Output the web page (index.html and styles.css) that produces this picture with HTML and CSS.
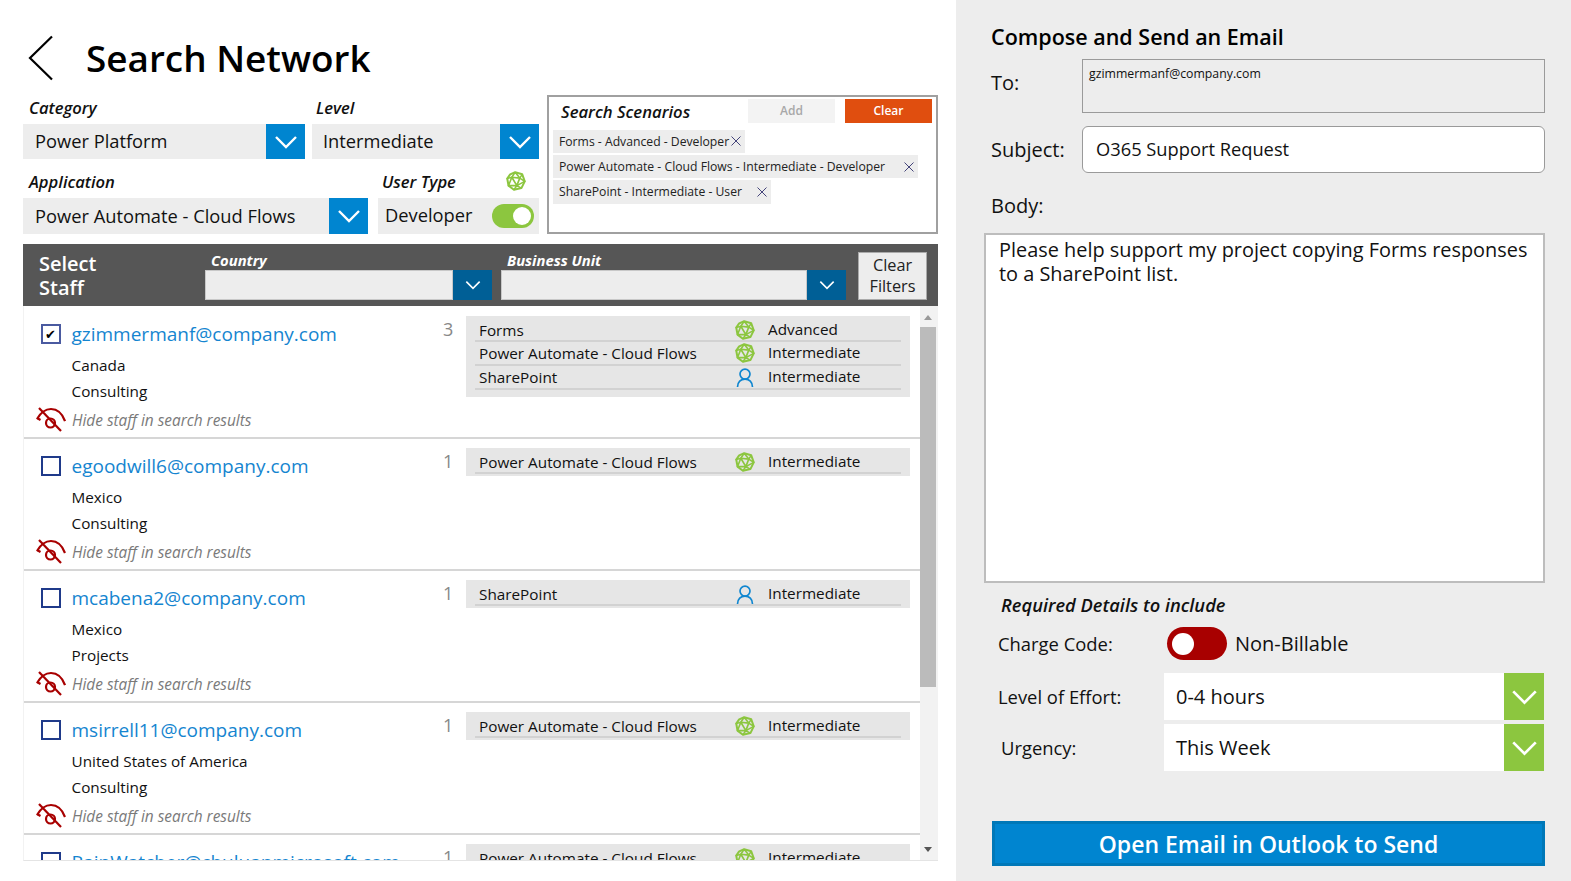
FILE: index.html
```html
<!DOCTYPE html>
<html lang="en">
<head>
  <meta charset="UTF-8">
  <meta name="viewport" content="width=device-width, initial-scale=1.0">
  <title>Search Network</title>
  <link rel="stylesheet" href="styles.css">
</head>
<body>
  <svg class="icon-defs" width="0" height="0">
    <symbol id="chevron" viewBox="0 0 24 14">
      <polyline points="2,2 12,12 22,2" fill="none" stroke="#fff" stroke-width="2.4"/>
    </symbol>
    <symbol id="close" viewBox="0 0 10 10">
      <path d="M0.5,0.5 9.5,9.5 M9.5,0.5 0.5,9.5" fill="none" stroke="#44447a" stroke-width="1"/>
    </symbol>
    <symbol id="mesh" viewBox="0 0 24 24">
      <g fill="none" stroke="#8cc63f" stroke-linejoin="round">
        <polygon stroke-width="2.4" points="11,1.5 19.5,4 22.5,12.5 18.5,20.5 9.5,22.5 3,17.5 1.5,9 5,4"/>
        <polygon stroke-width="2" points="7,7.5 16.5,8.5 13,17.5"/>
        <path stroke-width="1.9" d="M11,1.5 7,7.5 1.5,9 7,7.5 3,17.5 13,17.5 9.5,22.5 M13,17.5 18.5,20.5 M16.5,8.5 22.5,12.5 13,17.5 M16.5,8.5 11,1.5 M16.5,8.5 19.5,4"/>
      </g>
    </symbol>
    <symbol id="person" viewBox="0 0 24 24">
      <g fill="none" stroke="#0f86d0" stroke-width="2">
        <circle cx="12" cy="8.5" r="6"/>
        <path d="M3,24 C3,18 7,14.5 12,14.5 C17,14.5 21,18 21,24"/>
      </g>
    </symbol>
    <symbol id="eye-off" viewBox="0 0 30 26">
      <g fill="none" stroke="#a80000" stroke-width="2.2">
        <path d="M1,12 C5,5 10,2 15,2 C21,2 26,6 29,14"/>
        <path d="M1,11 L4.5,13"/>
        <circle cx="14.5" cy="16" r="4.5"/>
        <line x1="3" y1="1" x2="25" y2="24"/>
      </g>
    </symbol>
  </svg>

  <div class="app">
    <main class="search-panel">
      <div class="page-title">
        <svg class="back-icon" viewBox="0 0 26 46"><polyline points="24,1.5 2,23 24,44.5" fill="none" stroke="#000" stroke-width="2.2"/></svg>
        <h1>Search Network</h1>
      </div>

      <div class="top-section">
        <div class="filters">
          <div class="filter-row">
            <div class="filter filter-category">
              <div class="filter-label">Category</div>
              <div class="dropdown">
                <span class="dropdown-value">Power Platform</span>
                <span class="dropdown-btn"><svg class="chevron"><use href="#chevron"/></svg></span>
              </div>
            </div>
            <div class="filter filter-level">
              <div class="filter-label label-tight">Level</div>
              <div class="dropdown">
                <span class="dropdown-value value-tight">Intermediate</span>
                <span class="dropdown-btn"><svg class="chevron"><use href="#chevron"/></svg></span>
              </div>
            </div>
          </div>
          <div class="filter-row row-second">
            <div class="filter filter-application">
              <div class="filter-label">Application</div>
              <div class="dropdown">
                <span class="dropdown-value">Power Automate - Cloud Flows</span>
                <span class="dropdown-btn"><svg class="chevron"><use href="#chevron"/></svg></span>
              </div>
            </div>
            <div class="filter filter-usertype">
              <div class="filter-label label-tight usertype-label">User Type <svg class="mesh-icon"><use href="#mesh"/></svg></div>
              <div class="usertype-box">
                <span class="usertype-value">Developer</span>
                <span class="toggle toggle-on"></span>
              </div>
            </div>
          </div>
        </div>

        <section class="scenarios">
          <div class="scenarios-head">
            <div class="scenarios-title">Search Scenarios</div>
            <button class="btn-add">Add</button>
            <button class="btn-clear">Clear</button>
          </div>
          <div class="chip chip-1">Forms - Advanced - Developer<svg class="chip-x"><use href="#close"/></svg></div>
          <div class="chip chip-2">Power Automate - Cloud Flows - Intermediate - Developer<svg class="chip-x"><use href="#close"/></svg></div>
          <div class="chip chip-3">SharePoint - Intermediate - User<svg class="chip-x"><use href="#close"/></svg></div>
        </section>
      </div>

      <div class="staff-bar">
        <div class="staff-title">Select<br>Staff</div>
        <div class="staff-filter filter-country">
          <div class="staff-label">Country</div>
          <div class="staff-select">
            <span class="staff-input"></span>
            <span class="staff-btn"><svg class="chevron-small"><use href="#chevron"/></svg></span>
          </div>
        </div>
        <div class="staff-filter filter-unit">
          <div class="staff-label">Business Unit</div>
          <div class="staff-select">
            <span class="staff-input"></span>
            <span class="staff-btn"><svg class="chevron-small"><use href="#chevron"/></svg></span>
          </div>
        </div>
        <button class="btn-filters">Clear Filters</button>
      </div>

      <div class="staff-list">
        <div class="staff-rows">
          <div class="staff-row">
            <div class="staff-info">
              <div class="staff-email"><span class="checkbox checked">✔</span><a>gzimmermanf@company.com</a></div>
              <div class="staff-meta">Canada</div>
              <div class="staff-meta">Consulting</div>
              <div class="staff-hide"><svg class="eye-icon"><use href="#eye-off"/></svg><em>Hide staff in search results</em></div>
            </div>
            <div class="staff-count">3</div>
            <div class="skills skills-multi">
              <div class="skill"><span class="skill-name">Forms</span><svg class="skill-icon"><use href="#mesh"/></svg><span class="skill-level">Advanced</span></div>
              <div class="skill"><span class="skill-name">Power Automate - Cloud Flows</span><svg class="skill-icon"><use href="#mesh"/></svg><span class="skill-level">Intermediate</span></div>
              <div class="skill"><span class="skill-name">SharePoint</span><svg class="skill-icon"><use href="#person"/></svg><span class="skill-level">Intermediate</span></div>
            </div>
          </div>
          <div class="staff-row">
            <div class="staff-info">
              <div class="staff-email"><span class="checkbox"></span><a>egoodwill6@company.com</a></div>
              <div class="staff-meta">Mexico</div>
              <div class="staff-meta">Consulting</div>
              <div class="staff-hide"><svg class="eye-icon"><use href="#eye-off"/></svg><em>Hide staff in search results</em></div>
            </div>
            <div class="staff-count">1</div>
            <div class="skills">
              <div class="skill"><span class="skill-name">Power Automate - Cloud Flows</span><svg class="skill-icon"><use href="#mesh"/></svg><span class="skill-level">Intermediate</span></div>
            </div>
          </div>
          <div class="staff-row">
            <div class="staff-info">
              <div class="staff-email"><span class="checkbox"></span><a>mcabena2@company.com</a></div>
              <div class="staff-meta">Mexico</div>
              <div class="staff-meta">Projects</div>
              <div class="staff-hide"><svg class="eye-icon"><use href="#eye-off"/></svg><em>Hide staff in search results</em></div>
            </div>
            <div class="staff-count">1</div>
            <div class="skills">
              <div class="skill"><span class="skill-name">SharePoint</span><svg class="skill-icon"><use href="#person"/></svg><span class="skill-level">Intermediate</span></div>
            </div>
          </div>
          <div class="staff-row">
            <div class="staff-info">
              <div class="staff-email"><span class="checkbox"></span><a>msirrell11@company.com</a></div>
              <div class="staff-meta">United States of America</div>
              <div class="staff-meta">Consulting</div>
              <div class="staff-hide"><svg class="eye-icon"><use href="#eye-off"/></svg><em>Hide staff in search results</em></div>
            </div>
            <div class="staff-count">1</div>
            <div class="skills">
              <div class="skill"><span class="skill-name">Power Automate - Cloud Flows</span><svg class="skill-icon"><use href="#mesh"/></svg><span class="skill-level">Intermediate</span></div>
            </div>
          </div>
          <div class="staff-row">
            <div class="staff-info">
              <div class="staff-email"><span class="checkbox"></span><a>RainWatcher@chuluanmicrosoft.com</a></div>
            </div>
            <div class="staff-count">1</div>
            <div class="skills">
              <div class="skill"><span class="skill-name">Power Automate - Cloud Flows</span><svg class="skill-icon"><use href="#mesh"/></svg><span class="skill-level">Intermediate</span></div>
            </div>
          </div>
        </div>
        <div class="scrollbar">
          <span class="arrow-up"></span>
          <span class="thumb"></span>
          <span class="arrow-down"></span>
        </div>
      </div>
    </main>

    <aside class="email-panel">
      <h2>Compose and Send an Email</h2>
      <div class="field field-to">
        <label>To:</label>
        <div class="to-box">gzimmermanf@company.com</div>
      </div>
      <div class="field field-subject">
        <label>Subject:</label>
        <div class="subject-box">O365 Support Request</div>
      </div>
      <div class="body-label">Body:</div>
      <div class="body-box">Please help support my project copying Forms responses to a SharePoint list.</div>

      <div class="required-title">Required Details to include</div>
      <div class="detail detail-charge">
        <span class="detail-label">Charge Code:</span>
        <span class="toggle-big"></span>
        <span class="charge-value">Non-Billable</span>
      </div>
      <div class="detail">
        <span class="detail-label">Level of Effort:</span>
        <div class="green-select">
          <span class="green-value">0-4 hours</span>
          <span class="green-btn"><svg class="chevron"><use href="#chevron"/></svg></span>
        </div>
      </div>
      <div class="detail detail-urgency">
        <span class="detail-label label-urgency">Urgency:</span>
        <div class="green-select">
          <span class="green-value">This Week</span>
          <span class="green-btn"><svg class="chevron"><use href="#chevron"/></svg></span>
        </div>
      </div>
      <button class="btn-send">Open Email in Outlook to Send</button>
    </aside>
  </div>
</body>
</html>
```

FILE: styles.css
```css
* {
  margin: 0;
  padding: 0;
  box-sizing: border-box;
}

body {
  font-family: "Open Sans", "Noto Sans", sans-serif;
  background: #ffffff;
  color: #111111;
  overflow: hidden;
}

.icon-defs {
  display: block;
  height: 0;
}

.app {
  display: flex;
  width: 1571px;
  height: 881px;
}

/* left side */
.search-panel {
  flex: none;
  width: 956px;
  padding-left: 23px;
}

.page-title {
  display: flex;
  align-items: center;
  height: 95px;
  padding: 20px 0 0 5px;
}

.back-icon {
  width: 26px;
  height: 46px;
  margin-right: 32px;
}

h1 {
  font-size: 36.9px;
  font-weight: 600;
  color: #000;
}

.top-section {
  display: flex;
  gap: 8px;
  align-items: flex-start;
}

.filters {
  width: 516px;
}

.filter-row {
  display: flex;
  gap: 7px;
}

.row-second {
  gap: 10px;
}

.filter-category { width: 282px; }
.filter-level { width: 227px; }
.filter-application { width: 345px; }
.filter-usertype { width: 161px; }

.filter-label {
  height: 29px;
  padding: 1px 0 0 6px;
  font-size: 16.6px;
  font-weight: 600;
  font-style: italic;
  line-height: 24px;
}

.row-second .filter-label {
  height: 39px;
  padding-top: 11px;
}

.label-tight {
  padding-left: 4px;
}

.usertype-label {
  display: flex;
  justify-content: space-between;
  padding-right: 13px;
}

.mesh-icon {
  width: 20px;
  height: 20px;
  margin-top: 1px;
}

.dropdown {
  display: flex;
  align-items: center;
  height: 35px;
  background: #ededed;
  font-size: 18.3px;
}

.row-second .dropdown,
.usertype-box {
  height: 36px;
}

.dropdown-value {
  flex: 1;
  padding: 0 0 2px 12px;
}

.value-tight {
  padding-left: 11px;
}

.dropdown-btn {
  display: flex;
  align-items: center;
  justify-content: center;
  width: 39px;
  height: 100%;
  background: #0085d0;
}

.chevron {
  width: 24px;
  height: 14px;
}

.usertype-box {
  display: flex;
  align-items: center;
  justify-content: space-between;
  padding: 0 5px 0 7px;
  background: #ededed;
  font-size: 18.3px;
}

.usertype-value {
  padding-bottom: 3px;
}

.toggle {
  position: relative;
  width: 42px;
  height: 24px;
  border-radius: 12px;
  background: #8cc63f;
}

.toggle-on::after {
  content: '';
  position: absolute;
  top: 3px;
  right: 3px;
  width: 18px;
  height: 18px;
  border-radius: 50%;
  background: #fff;
}

.scenarios {
  width: 391px;
  height: 139px;
  padding: 0 4px;
  border: 2px solid #a0a0a0;
}

.scenarios-head {
  display: flex;
  align-items: flex-start;
  height: 32.5px;
}

.scenarios-title {
  width: 195px;
  padding: 3px 0 0 8px;
  font-size: 16.7px;
  font-weight: 600;
  font-style: italic;
}

.scenarios-head button {
  width: 87px;
  height: 24px;
  margin-top: 2px;
  padding-bottom: 2px;
  border: none;
  font-family: inherit;
  font-size: 12px;
  font-weight: 600;
}

.btn-add {
  background: #f3f3f3;
  color: #a8a8a8;
  margin-right: 10px;
}

.btn-clear {
  background: #e04e0f;
  color: #fff;
}

.chip {
  display: flex;
  align-items: center;
  justify-content: space-between;
  height: 23.5px;
  margin-bottom: 1.8px;
  padding: 0 4px 0 6px;
  background: #ededed;
  font-size: 12.2px;
  color: #222;
}

.chip-1 { width: 192px; }
.chip-2 { width: 365px; }
.chip-3 { width: 218px; }

.chip-x {
  width: 10px;
  height: 10px;
}

.staff-bar {
  display: flex;
  width: 915px;
  height: 62px;
  margin-top: 10px;
  padding-left: 16px;
  background: #565656;
  color: #fff;
}

.staff-title {
  width: 166px;
  padding-top: 8px;
  font-size: 20px;
  font-weight: 600;
  line-height: 24px;
}

.staff-filter {
  padding-top: 6px;
}

.filter-country { width: 287px; margin-right: 9px; }
.filter-unit { width: 345px; margin-right: 12px; }

.staff-label {
  height: 20px;
  padding-left: 6px;
  font-size: 14.8px;
  font-weight: 700;
  font-style: italic;
  line-height: 20px;
}

.staff-select {
  display: flex;
  height: 30px;
}

.staff-input {
  flex: 1;
  background: #ededed;
  border: 1px solid #c8c8c8;
}

.staff-btn {
  display: flex;
  align-items: center;
  justify-content: center;
  width: 39px;
  background: #005f96;
}

.chevron-small {
  width: 16px;
  height: 10px;
}

.btn-filters {
  width: 69px;
  height: 48px;
  margin-top: 8px;
  background: #ededed;
  border: 1px solid #aaa;
  color: #222;
  font-family: inherit;
  font-size: 16.3px;
  font-weight: 500;
  line-height: 21px;
}

/* staff list */
.staff-list {
  display: flex;
  width: 915px;
  height: 555px;
  overflow: hidden;
  border-left: 1px solid #f2f2f2;
  border-bottom: 1px solid #e4e4e4;
}

.staff-rows {
  flex: 1;
  padding-top: 1px;
  overflow: hidden;
}

.staff-row {
  display: flex;
  height: 132px;
  padding-top: 9px;
  border-bottom: 2px solid #d6d6d6;
}

.staff-info {
  width: 405px;
  padding-left: 17px;
}

.staff-email {
  display: flex;
  align-items: center;
  gap: 11px;
  height: 36px;
  font-size: 19px;
  font-weight: 500;
  color: #1585d0;
}

.checkbox {
  display: flex;
  align-items: center;
  justify-content: center;
  width: 19.5px;
  height: 19.5px;
  border: 2px solid #1f3a8a;
  color: #000;
  font-size: 13px;
  line-height: 1;
}

.checkbox.checked {
  border-color: #4a5aa0;
}

.staff-meta {
  height: 25.5px;
  padding-left: 30.5px;
  font-size: 15.3px;
  line-height: 25.5px;
}

.staff-meta:nth-child(2) {
  margin-top: 1px;
}

.staff-hide {
  display: flex;
  align-items: center;
  height: 28px;
  margin: 2px 0 0 -5px;
  color: #7a7a7a;
  font-size: 15.4px;
}

.eye-icon {
  width: 30px;
  height: 26px;
  margin-right: 6px;
}

.staff-count {
  width: 37px;
  padding-top: 1px;
  padding-left: 14px;
  color: #888;
  font-size: 18px;
  line-height: 24px;
}

.skills {
  width: 444px;
  padding: 0 9px 2px;
  background: #e6e6e6;
  align-self: flex-start;
}

.skills-multi {
  padding-bottom: 7px;
}

.skill {
  display: flex;
  align-items: center;
  height: 24px;
  padding-left: 4px;
  border-bottom: 2px solid #d2d2d2;
  font-size: 15.3px;
}

.skills .skill:first-child {
  height: 26px;
  padding-top: 3px;
}

.skill-name {
  width: 256px;
}

.skill-icon {
  width: 20px;
  height: 20px;
  margin-right: 13px;
}

.skill-level {
  padding-bottom: 2px;
}

.scrollbar {
  display: flex;
  flex-direction: column;
  align-items: center;
  width: 18px;
  background: #f2f2f2;
  padding: 9px 2px 8px 0;
}

.thumb {
  width: 16px;
  height: 360px;
  margin-top: 7px;
  background: #bbbbbb;
}

.arrow-up {
  border: 4px solid transparent;
  border-top: 0;
  border-bottom: 5px solid #999;
}

.arrow-down {
  margin-top: auto;
  border: 4px solid transparent;
  border-bottom: 0;
  border-top: 5px solid #555;
}

/* right side */
.email-panel {
  flex: 1;
  padding: 23px 26px 0 35px;
  background: #ededed;
}

h2 {
  height: 30px;
  font-size: 21.5px;
  font-weight: 600;
  line-height: 28px;
  color: #000;
}

.field {
  display: flex;
  align-items: center;
}

.field label {
  width: 91px;
  font-size: 20px;
}

.field-to {
  height: 54px;
  margin-top: 6px;
}

.field-to label {
  padding-bottom: 8px;
}

.to-box {
  flex: 1;
  height: 54px;
  padding: 5px 6px;
  border: 1px solid #9a9a9a;
  font-size: 12.3px;
  line-height: 18px;
}

.field-subject {
  margin-top: 13px;
}

.subject-box {
  flex: 1;
  height: 47px;
  padding-left: 13px;
  background: #fff;
  border: 1px solid #9a9a9a;
  border-radius: 6px;
  font-size: 18.3px;
  line-height: 43px;
}

.body-label {
  height: 60px;
  padding-top: 19px;
  font-size: 20px;
  line-height: 28px;
}

.body-box {
  width: 561px;
  height: 350px;
  margin-left: -7px;
  padding: 3px 4px 4px 13px;
  background: #fff;
  border: 2px solid #bdbdbd;
  font-size: 19.9px;
  line-height: 24px;
}

.required-title {
  height: 44px;
  padding: 9px 0 0 10px;
  font-size: 18.3px;
  font-weight: 600;
  font-style: italic;
  line-height: 26px;
}

.detail {
  display: flex;
  align-items: center;
  height: 47px;
  margin-bottom: 4px;
}

.detail-charge {
  height: 33px;
  margin-bottom: 13px;
}

.detail-label {
  width: 173px;
  padding-left: 7px;
  font-size: 18.4px;
}

.label-urgency {
  padding-left: 10px;
}

.toggle-big {
  position: relative;
  width: 60px;
  height: 33px;
  margin-left: 3px;
  border-radius: 17px;
  background: #a80000;
}

.toggle-big::after {
  content: '';
  position: absolute;
  top: 5.5px;
  left: 5px;
  width: 22px;
  height: 22px;
  border-radius: 50%;
  background: #fff;
}

.charge-value {
  margin-left: 8px;
  font-size: 20px;
}

.green-select {
  display: flex;
  align-items: center;
  width: 380px;
  height: 47px;
  background: #fff;
  font-size: 20px;
}

.green-value {
  flex: 1;
  padding-left: 12px;
}

.green-btn {
  display: flex;
  align-items: center;
  justify-content: center;
  width: 40px;
  height: 100%;
  background: #8cc63f;
}

.green-btn .chevron {
  width: 27px;
  height: 16px;
}

.btn-send {
  display: block;
  width: 553px;
  height: 45px;
  margin: 50px 0 0 1px;
  background: #0085d0;
  border: 3px solid #0078b8;
  color: #fff;
  font-family: inherit;
  font-size: 23px;
  font-weight: 600;
}
```
